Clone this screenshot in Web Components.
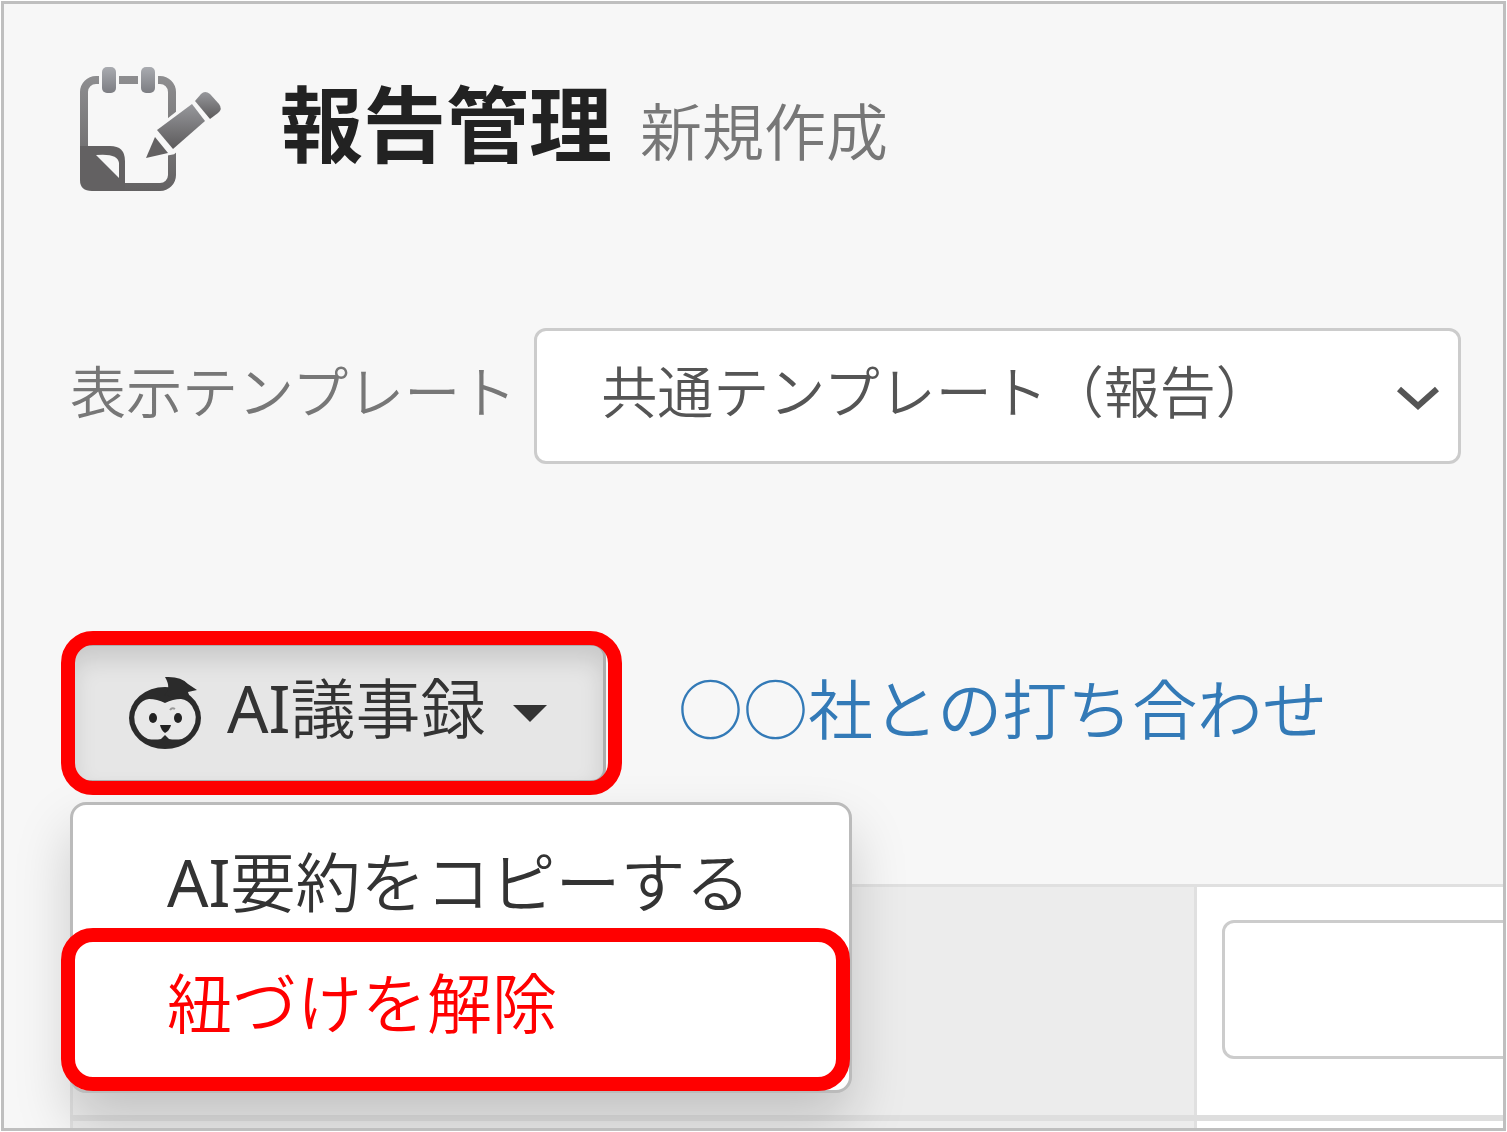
<!DOCTYPE html>
<html lang="ja">
<head>
<meta charset="utf-8">
<title>報告管理</title>
<style>
    body {
        margin: 0;
        --bg: #f7f7f7;
        --border: #ccc;
        --mark: #f00;
        font-family: "Noto Sans", "Noto Sans CJK JP DemiLight", "Noto Sans CJK JP", sans-serif;
        color: #333;
    }
</style>
</head>
<body>

<template id="app-frame">
    <style>
        :host {
            display: block;
            box-sizing: border-box;
            height: 100vh;
            padding: 1px;
            background: #fff;
        }

        main {
            box-sizing: border-box;
            height: 100%;
            overflow: hidden;
            display: flex;
            flex-direction: column;
            padding: 62px 0 0 66px;
            border: 3px solid #bfbfbf;
            background: var(--bg);
        }
    </style>
    <main><slot></slot></main>
</template>

<template id="page-title">
    <style>
        :host {
            display: flex;
            align-items: flex-start;
            gap: 54px;
            margin-bottom: 134px;
        }

        svg {
            flex: none;
            width: 156px;
            height: 128px;
        }

        h1 {
            margin: 0;
            font-family: "Noto Sans", "Noto Sans CJK JP", sans-serif;
            font-size: 83px;
            line-height: 116px;
            font-weight: 700;
            color: #222;
            white-space: nowrap;
        }

        small {
            margin-left: 28px;
            font-family: "Noto Sans", "Noto Sans CJK JP DemiLight", "Noto Sans CJK JP", sans-serif;
            font-size: 62px;
            line-height: 1;
            font-weight: 400;
            color: #777;
        }
    </style>
    <svg viewBox="70 66 156 128" aria-hidden="true">
        <defs>
            <linearGradient id="note" gradientUnits="userSpaceOnUse" x1="0" y1="76" x2="0" y2="192">
                <stop offset="0" stop-color="#8e8e90"/>
                <stop offset="1" stop-color="#636162"/>
            </linearGradient>
            <linearGradient id="ring" x1="0" y1="0" x2="0" y2="1">
                <stop offset="0" stop-color="#a9abb0"/>
                <stop offset="1" stop-color="#7c7d82"/>
            </linearGradient>
            <linearGradient id="pen" x1="0" y1="0" x2="0" y2="1">
                <stop offset="0" stop-color="#97989c"/>
                <stop offset="1" stop-color="#5c5a5b"/>
            </linearGradient>
        </defs>
        <rect x="84" y="80" width="88" height="107" rx="12" fill="none" stroke="url(#note)" stroke-width="8"/>
        <path d="M80 146 H110 Q125 146 125 161 V191 H92 Q80 191 80 180 Z" fill="#636162"/>
        <path d="M96 155 Q118 153 119 163 V178 Z" fill="#f7f7f7"/>
        <rect x="99" y="74" width="20" height="14" fill="#f7f7f7"/>
        <rect x="138" y="74" width="20" height="14" fill="#f7f7f7"/>
        <rect x="102" y="67" width="14" height="26" rx="5" fill="url(#ring)"/>
        <rect x="141" y="67" width="14" height="26" rx="5" fill="url(#ring)"/>
        <path d="M146 157 L157 130 L205 92 L221 109 L173 152 Z" fill="#f7f7f7" stroke="#f7f7f7" stroke-width="5"/>
        <path d="M146 158 L155 137 L168 153 Z" fill="#636162"/>
        <path d="M157 130 L192 104 L205 121 L173 149 Z" fill="url(#pen)"/>
        <path d="M195 101 L201 94 Q205 90 210 94 L219 104 Q223 109 218 113 L210 119 Z" fill="url(#pen)"/>
    </svg>
    <h1><slot></slot><small><slot name="sub"></slot></small></h1>
</template>

<template id="template-select">
    <style>
        :host {
            display: flex;
            align-items: center;
            gap: 18px;
            margin: 0 42px 179px 0;
            font-size: 56px;
        }

        label {
            padding-bottom: 10px;
            line-height: 64px;
            color: #777;
            white-space: nowrap;
        }

        .field {
            flex: 1;
            display: grid;
            align-items: center;
        }

        select, svg {
            grid-area: 1 / 1;
        }

        select {
            appearance: none;
            box-sizing: border-box;
            width: 100%;
            height: 136px;
            padding: 0 64px 10px 64px;
            border: 3px solid var(--border);
            border-radius: 12px;
            background: #fff;
            font: inherit;
            color: #555;
        }

        svg {
            justify-self: end;
            width: 44px;
            height: 28px;
            margin: 4px 21px 0 0;
            pointer-events: none;
        }
    </style>
    <label for="template">表示テンプレート</label>
    <div class="field">
        <select id="template">
            <option>共通テンプレート（報告）</option>
        </select>
        <svg viewBox="0 0 44 28" aria-hidden="true">
            <path d="M3 5 L22 22 L41 5" fill="none" stroke="#555" stroke-width="6"/>
        </svg>
    </div>
</template>

<template id="minutes-menu">
    <style>
        :host {
            display: block;
            position: relative;
            z-index: 1;
            font-size: 65px;
        }

        button {
            box-sizing: border-box;
            display: flex;
            align-items: center;
            width: 536px;
            height: 140px;
            padding: 0 56px 0 55px;
            border: 3px solid #adadad;
            border-radius: 14px;
            background: #e6e6e6;
            box-shadow: inset 0 14px 23px rgba(0, 0, 0, .125);
            font: inherit;
            color: #333;
            white-space: nowrap;
            cursor: pointer;
        }

        .face {
            flex: none;
            width: 76px;
            height: 74px;
            margin-right: 23px;
        }

        .label {
            line-height: 72px;
            padding-bottom: 10px;
        }

        .caret {
            margin-left: auto;
            border: 17px solid transparent;
            border-top-color: #333;
            border-bottom: 0;
        }

        .menu {
            position: absolute;
            top: 159px;
            left: 0;
            box-sizing: border-box;
            width: 782px;
            padding: 17px 0 26px;
            border: 3px solid #bbb;
            border-radius: 16px;
            background: #fff;
            box-shadow: 0 28px 56px rgba(0, 0, 0, .175);
        }

        .menu[hidden] {
            display: none;
        }

        .mark {
            position: absolute;
            inset: -12px -16px -12px -9px;
            border: 14px solid var(--mark);
            border-radius: 32px;
            pointer-events: none;
        }
    </style>
    <button type="button" aria-haspopup="true" aria-expanded="true">
        <svg class="face" viewBox="128 677 76 74" aria-hidden="true">
            <ellipse cx="165" cy="719" rx="36" ry="31" fill="#2b2b2b"/>
            <path d="M165 678 Q181 677 188 685 L197 691 L188 693 L191 702 L164 696 Q172 690 165 678 Z" fill="#2b2b2b"/>
            <path d="M165 704 Q173 700 181 700 Q188 701 192 707 Q199 718 193 729 Q189 737 182 740 Q175 741 169 740 L165 736 L161 740 Q155 741 148 740 Q141 737 137 729 Q131 718 138 707 Q142 701 149 700 Q157 700 165 704 Z" fill="#e8e8e8"/>
            <ellipse cx="153" cy="719" rx="4" ry="5" fill="#222"/>
            <ellipse cx="178" cy="719" rx="4" ry="5" fill="#222"/>
            <path d="M160 726 H171 Q170 731 165 734 Q161 731 160 726 Z" fill="#222"/>
            <path d="M170 711 Q172 708 175 710" fill="none" stroke="#999" stroke-width="2"/>
        </svg>
        <span class="label"><slot></slot></span>
        <span class="caret"></span>
    </button>
    <span class="mark"></span>
    <div class="menu"><slot name="item"></slot></div>
</template>

<template id="menu-item">
    <style>
        :host {
            display: block;
            position: relative;
        }

        a {
            display: block;
            padding: 0 94px;
            line-height: 121px;
            color: inherit;
            text-decoration: none;
            white-space: nowrap;
        }

        :host([marked]) {
            color: var(--mark);
        }

        :host([marked])::after {
            content: "";
            position: absolute;
            inset: -15px -1px -27px -12px;
            border: 14px solid var(--mark);
            border-radius: 32px;
            pointer-events: none;
        }
    </style>
    <a href="#"><slot></slot></a>
</template>

<template id="minutes-bar">
    <style>
        :host {
            display: flex;
            align-items: center;
            gap: 72px;
            margin-bottom: 101px;
            font-size: 65px;
        }

        ::slotted(a) {
            padding-bottom: 8px;
            line-height: 72px;
            color: #337ab7;
            text-decoration: none;
            white-space: nowrap;
        }
    </style>
    <slot></slot>
</template>

<template id="report-form">
    <style>
        :host {
            display: block;
        }

        /* the form runs on past the right edge of the frame */
        table {
            width: 117%;
            table-layout: fixed;
            border-collapse: collapse;
        }

        th, td {
            padding: 33px 25px 56px;
            border: 3px solid #e0e0e0;
            border-bottom: 6px solid #dedede;
        }

        th {
            width: 67%;
            padding: 0;
            background: #ececec;
        }

        td {
            background: #fff;
        }

        input {
            display: block;
            box-sizing: border-box;
            width: 100%;
            height: 139px;
            padding: 0 24px;
            border: 3px solid var(--border);
            border-radius: 12px;
            background: #fff;
            font: inherit;
            font-size: 56px;
            color: #555;
        }
    </style>
    <table>
        <tr>
            <th scope="row"></th>
            <td><input type="text" aria-label="件名"></td>
        </tr>
        <tr>
            <th scope="row"></th>
            <td></td>
        </tr>
    </table>
</template>

<app-frame>
    <page-title>報告管理<span slot="sub">新規作成</span></page-title>
    <template-select></template-select>
    <minutes-bar>
        <minutes-menu>
            AI議事録
            <menu-item slot="item">AI要約をコピーする</menu-item>
            <menu-item slot="item" marked>紐づけを解除</menu-item>
        </minutes-menu>
        <a href="#">○○社との打ち合わせ</a>
    </minutes-bar>
    <report-form></report-form>
</app-frame>

<script type="text/javascript">
    class TemplateElement extends HTMLElement {
        constructor() {
            super();
            let shadow = this.attachShadow({mode: 'open'});
            let template = document.getElementById(this.localName);
            shadow.appendChild(template.content.cloneNode(true));
        }
    }

    class MinutesMenuElement extends TemplateElement {
        connectedCallback() {
            let button = this.shadowRoot.querySelector('button');
            let menu = this.shadowRoot.querySelector('.menu');
            button.onclick = () => {
                menu.hidden = !menu.hidden;
                button.setAttribute('aria-expanded', String(!menu.hidden));
            }
        }
    }

    customElements.define('app-frame', class extends TemplateElement {});
    customElements.define('page-title', class extends TemplateElement {});
    customElements.define('template-select', class extends TemplateElement {});
    customElements.define('minutes-bar', class extends TemplateElement {});
    customElements.define('minutes-menu', MinutesMenuElement);
    customElements.define('menu-item', class extends TemplateElement {});
    customElements.define('report-form', class extends TemplateElement {});
</script>
</body>
</html>
